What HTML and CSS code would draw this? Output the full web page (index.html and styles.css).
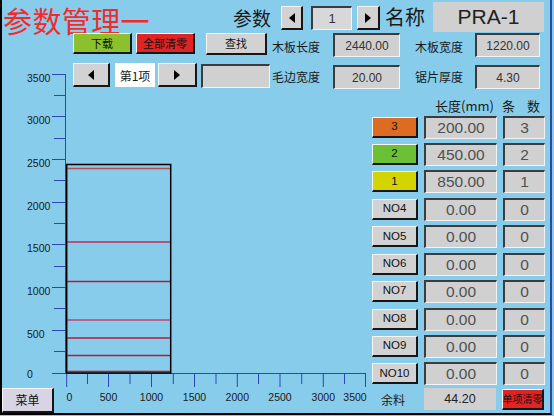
FILE: index.html
```html
<!DOCTYPE html>
<html lang="zh">
<head>
    <meta charset="UTF-8">
    <title>参数管理</title>
    <link rel="stylesheet" href="styles.css">
</head>
<body>
<div class="screen">

    <div class="header">
        <div class="title">参数管理一</div>
        <div class="head-label">参数</div>
        <button class="btn arrow-sm"><svg width="6" height="10" viewBox="0 0 6 10"><path d="M6 0V10L0 5Z"/></svg></button>
        <div class="box num-box">1</div>
        <button class="btn arrow-sm gap-r"><svg width="6" height="10" viewBox="0 0 6 10"><path d="M0 0V10L6 5Z"/></svg></button>
        <div class="head-label name-label">名称</div>
        <div class="name-box">PRA-1</div>
    </div>

    <div class="row row-a">
        <button class="btn btn-green w-dl">下载</button>
        <button class="btn btn-red w-clr">全部清零</button>
        <button class="btn w-find">查找</button>
        <div class="label lbl-1">木板长度</div>
        <div class="box val val-1">2440.00</div>
        <div class="label lbl-2">木板宽度</div>
        <div class="box val val-2">1220.00</div>
    </div>

    <div class="row row-b">
        <button class="btn arrow-lg first"><svg width="6" height="10" viewBox="0 0 6 10"><path d="M6 0V10L0 5Z"/></svg></button>
        <div class="item-box">第1项</div>
        <button class="btn arrow-lg next"><svg width="6" height="10" viewBox="0 0 6 10"><path d="M0 0V10L6 5Z"/></svg></button>
        <div class="box empty-box"></div>
        <div class="label lbl-3">毛边宽度</div>
        <div class="box val val-1 low">20.00</div>
        <div class="label lbl-2">锯片厚度</div>
        <div class="box val val-2 low">4.30</div>
    </div>

    <div class="main">
        <div class="plot">
            <svg class="chart" width="368" height="349" viewBox="0 0 368 349">
                <g stroke="#2a48b6" stroke-width="1">
                    <!-- y axis -->
                    <line x1="63.5" y1="10" x2="63.5" y2="309"/>
                    <line x1="50" y1="10.5" x2="63.5" y2="10.5"/>
                    <line x1="52" y1="31.5" x2="63.5" y2="31.5"/>
                    <line x1="50" y1="52.5" x2="63.5" y2="52.5"/>
                    <line x1="52" y1="74.5" x2="63.5" y2="74.5"/>
                    <line x1="50" y1="95.5" x2="63.5" y2="95.5"/>
                    <line x1="52" y1="116.5" x2="63.5" y2="116.5"/>
                    <line x1="50" y1="138.5" x2="63.5" y2="138.5"/>
                    <line x1="52" y1="159.5" x2="63.5" y2="159.5"/>
                    <line x1="50" y1="180.5" x2="63.5" y2="180.5"/>
                    <line x1="52" y1="202.5" x2="63.5" y2="202.5"/>
                    <line x1="50" y1="223.5" x2="63.5" y2="223.5"/>
                    <line x1="52" y1="244.5" x2="63.5" y2="244.5"/>
                    <line x1="50" y1="266.5" x2="63.5" y2="266.5"/>
                    <line x1="52" y1="287.5" x2="63.5" y2="287.5"/>
                    <!-- x axis -->
                    <line x1="50" y1="309.5" x2="364" y2="309.5"/>
                    <line x1="64.7" y1="309" x2="64.7" y2="323"/>
                    <line x1="85.5" y1="309" x2="85.5" y2="320"/>
                    <line x1="106.5" y1="309" x2="106.5" y2="323"/>
                    <line x1="128" y1="309" x2="128" y2="320"/>
                    <line x1="149.5" y1="309" x2="149.5" y2="323"/>
                    <line x1="171.3" y1="309" x2="171.3" y2="320"/>
                    <line x1="192.5" y1="309" x2="192.5" y2="323"/>
                    <line x1="214" y1="309" x2="214" y2="320"/>
                    <line x1="235.3" y1="309" x2="235.3" y2="323"/>
                    <line x1="256.5" y1="309" x2="256.5" y2="320"/>
                    <line x1="278" y1="309" x2="278" y2="323"/>
                    <line x1="299.7" y1="309" x2="299.7" y2="320"/>
                    <line x1="321.3" y1="309" x2="321.3" y2="323"/>
                    <line x1="342.5" y1="309" x2="342.5" y2="320"/>
                    <line x1="363.5" y1="309" x2="363.5" y2="323"/>
                </g>
                <g class="tick-text">
                    <text x="25" y="14">3500</text>
                    <text x="25" y="56">3000</text>
                    <text x="25" y="99">2500</text>
                    <text x="25" y="142">2000</text>
                    <text x="25" y="184">1500</text>
                    <text x="25" y="227">1000</text>
                    <text x="25" y="270">500</text>
                    <text x="25" y="310">0</text>
                </g>
                <g class="tick-text mid">
                    <text x="67.5" y="333">0</text>
                    <text x="106.5" y="333">500</text>
                    <text x="149.5" y="333">1000</text>
                    <text x="192.5" y="333">1500</text>
                    <text x="235.3" y="333">2000</text>
                    <text x="278" y="333">2500</text>
                    <text x="321.3" y="333">3000</text>
                    <text x="353" y="333">3500</text>
                </g>
                <!-- cut lines -->
                <g stroke-width="1.3">
                    <line x1="65.5" y1="104.5" x2="168" y2="104.5" stroke="#b44c52"/>
                    <line x1="65.5" y1="178" x2="168" y2="178" stroke="#b8507c" stroke-width="2"/>
                    <line x1="65.5" y1="217.5" x2="168" y2="217.5" stroke="#c0143a"/>
                    <line x1="65.5" y1="256" x2="168" y2="256" stroke="#c2406c"/>
                    <line x1="65.5" y1="274" x2="168" y2="274" stroke="#c0143a"/>
                    <line x1="65.5" y1="291.5" x2="168" y2="291.5" stroke="#b81438"/>
                    <line x1="65.5" y1="307.5" x2="168" y2="307.5" stroke="#d01020" stroke-width="1.6"/>
                </g>
                <!-- board -->
                <rect x="64.7" y="100.5" width="104" height="208.5" fill="none" stroke="#000" stroke-width="1.5"/>
            </svg>
            <button class="btn menu-btn">菜单</button>
        </div>

        <div class="table">
            <div class="thead">
                <span class="h-len">长度(mm)</span>
                <span class="h-cnt">条</span>
                <span class="h-cnt2">数</span>
            </div>
            <div class="trow"><button class="btn tag c-orange">3</button><div class="box len">200.00</div><div class="box cnt">3</div></div>
            <div class="trow"><button class="btn tag c-green">2</button><div class="box len">450.00</div><div class="box cnt">2</div></div>
            <div class="trow"><button class="btn tag c-yellow">1</button><div class="box len">850.00</div><div class="box cnt">1</div></div>
            <div class="trow"><button class="btn tag">NO4</button><div class="box len">0.00</div><div class="box cnt">0</div></div>
            <div class="trow"><button class="btn tag">NO5</button><div class="box len">0.00</div><div class="box cnt">0</div></div>
            <div class="trow"><button class="btn tag">NO6</button><div class="box len">0.00</div><div class="box cnt">0</div></div>
            <div class="trow"><button class="btn tag">NO7</button><div class="box len">0.00</div><div class="box cnt">0</div></div>
            <div class="trow"><button class="btn tag">NO8</button><div class="box len">0.00</div><div class="box cnt">0</div></div>
            <div class="trow"><button class="btn tag">NO9</button><div class="box len">0.00</div><div class="box cnt">0</div></div>
            <div class="trow"><button class="btn tag">NO10</button><div class="box len">0.00</div><div class="box cnt">0</div></div>
            <div class="tfoot">
                <div class="rest-label">余料</div>
                <div class="rest-box">44.20</div>
                <button class="btn btn-red clr-one">单项清零</button>
            </div>
        </div>
    </div>

</div>
</body>
</html>
```

FILE: styles.css
```css
body {
    margin: 0;
    background: #88ccec;
    font-family: "Noto Sans CJK SC", sans-serif;
    color: #1a1a1a;
}
.screen {
    width: 552px;
    height: 415px;
    box-sizing: border-box;
    border-left: 2px solid #000;
    border-right: 2px solid #2c4a9c;
    border-bottom: 2px solid #000;
    display: flex;
    flex-direction: column;
    overflow: hidden;
}

/* common widgets */
.btn {
    box-sizing: border-box;
    margin: 0;
    padding: 0;
    border-style: solid;
    border-width: 1px 2px 2px 1px;
    border-color: #f6f6f6 #161616 #161616 #f6f6f6;
    background: #d2d2d2;
    font-family: "Noto Sans CJK SC", sans-serif;
    font-size: 11px;
    line-height: 1;
    color: #111;
    display: flex;
    align-items: center;
    justify-content: center;
    flex: none;
}
.btn svg {
    fill: #000;
}
.box {
    box-sizing: border-box;
    border-style: solid;
    border-width: 2px 1px 1px 2px;
    border-color: #3c3c3c #f4f4f4 #f4f4f4 #3c3c3c;
    background: #d0d0d0;
    display: flex;
    align-items: center;
    justify-content: center;
    font-family: "Liberation Sans", sans-serif;
    color: #333;
    flex: none;
}
.btn-green {
    background: #8cc02c;
}
.btn-red {
    background: #e02424;
}
.label {
    font-size: 12px;
    line-height: 28px;
    width: 48px;
    flex: none;
    white-space: nowrap;
}

/* header */
.header {
    display: flex;
    align-items: flex-start;
    height: 33px;
    flex: none;
}
.title {
    margin-left: 1px;
    margin-top: 6px;
    width: 152px;
    height: 27px;
    font-size: 29px;
    line-height: 29px;
    letter-spacing: 0.4px;
    color: #f42a2a;
    white-space: nowrap;
    flex: none;
}
.head-label {
    margin-left: 78px;
    margin-top: 6px;
    font-size: 19px;
    line-height: 24px;
    width: 38px;
    flex: none;
    white-space: nowrap;
}
.name-label {
    margin-left: 5px;
    margin-top: 5px;
    font-size: 20px;
    width: 40px;
}
.arrow-sm {
    margin-left: 10px;
    margin-top: 6px;
    width: 22px;
    height: 24px;
}
.num-box {
    margin-left: 8px;
    margin-top: 6px;
    width: 41px;
    height: 24px;
    font-size: 13px;
    background: #d8d8d8;
}
.arrow-sm.gap-r {
    margin-left: 5px;
    width: 23px;
}
.name-box {
    margin-left: 8px;
    margin-top: 2px;
    width: 111px;
    height: 30px;
    background: #d0d0d0;
    font-family: "Liberation Sans", sans-serif;
    font-size: 21px;
    color: #222;
    display: flex;
    align-items: center;
    justify-content: center;
    flex: none;
}

/* parameter rows */
.row {
    display: flex;
    align-items: flex-start;
    flex: none;
}
.row-a {
    height: 30px;
}
.row-b {
    height: 26px;
}
.w-dl {
    margin-left: 71px;
    width: 59px;
    height: 21px;
}
.w-clr {
    margin-left: 4px;
    width: 59px;
    height: 21px;
}
.w-find {
    margin-left: 11px;
    width: 61px;
    height: 22px;
}
.lbl-1 {
    margin-left: 5px;
}
.lbl-2 {
    margin-left: 15px;
}
.lbl-3 {
    margin-left: 2px;
}
.val {
    height: 24px;
    font-size: 12px;
}
.val-1 {
    margin-left: 13px;
    width: 67px;
}
.val-2 {
    margin-left: 12px;
    width: 65px;
}
.val.low {
    margin-top: 2px;
}
.arrow-lg {
    width: 37px;
    height: 24px;
}
.arrow-lg.first {
    margin-left: 71px;
}
.arrow-lg.next {
    margin-left: 3px;
    width: 39px;
}
.item-box {
    margin-left: 5px;
    width: 40px;
    height: 24px;
    background: #fff;
    font-size: 12px;
    display: flex;
    align-items: center;
    justify-content: center;
    flex: none;
}
.empty-box {
    margin-left: 4px;
    margin-top: 1px;
    width: 69px;
    height: 24px;
}

/* chart + table */
.main {
    display: flex;
    flex: 1;
}
.plot {
    display: grid;
    width: 368px;
    margin-top: -25px;
    flex: none;
}
.chart,
.menu-btn {
    grid-area: 1 / 1;
}
.chart {
    display: block;
}
.tick-text text {
    font-family: "Liberation Sans", sans-serif;
    font-size: 10.5px;
    fill: #1a1a1a;
    dominant-baseline: central;
}
.tick-text.mid text {
    text-anchor: middle;
}
.menu-btn {
    align-self: end;
    justify-self: start;
    width: 52px;
    height: 25px;
    background: #d8d4e4;
    font-size: 12px;
}

.table {
    display: flex;
    flex-direction: column;
    flex: none;
    width: 180px;
}
.thead {
    display: flex;
    height: 27px;
    padding-top: 7px;
    box-sizing: border-box;
    font-size: 13px;
    line-height: 20px;
}
.h-len {
    margin-left: 65px;
    width: 53px;
    white-space: nowrap;
}
.h-cnt {
    margin-left: 14px;
}
.h-cnt2 {
    margin-left: 12px;
}
.trow {
    display: flex;
    align-items: center;
    height: 22px;
    margin-bottom: 5.45px;
}
.tag {
    margin-left: 2px;
    width: 46px;
    height: 21px;
    font-family: "Liberation Sans", sans-serif;
    font-size: 11.5px;
}
.c-orange {
    background: #dc6c22;
}
.c-green {
    background: #6cc034;
}
.c-yellow {
    background: #d4d400;
}
.len {
    margin-left: 6px;
    width: 73px;
    height: 23px;
    font-size: 15.5px;
    color: #505050;
}
.cnt {
    margin-left: 6px;
    width: 42px;
    height: 23px;
    font-size: 15.5px;
    color: #505050;
}
.tfoot {
    display: flex;
    align-items: center;
    margin-top: -2.5px;
    height: 23px;
}
.rest-label {
    margin-left: 11px;
    width: 43px;
    font-size: 12px;
}
.rest-box {
    width: 72px;
    height: 22px;
    background: #d0d0d0;
    font-family: "Liberation Sans", sans-serif;
    font-size: 12.5px;
    color: #222;
    display: flex;
    align-items: center;
    justify-content: center;
    flex: none;
}
.clr-one {
    margin-left: 6px;
    width: 42px;
    height: 21px;
    font-size: 10px;
    white-space: nowrap;
    overflow: hidden;
}
```
